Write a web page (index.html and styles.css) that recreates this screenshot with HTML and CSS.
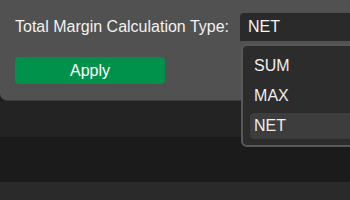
FILE: index.html
```html
<!DOCTYPE html>
<html lang="en">
<head>
  <meta charset="UTF-8" />
  <title>Margin Settings</title>
  <link rel="stylesheet" href="styles.css">
</head>
<body>

  <div class="panel">
    <div class="field">
      <label class="field-label">Total Margin Calculation Type:</label>
      <div class="select">
        <span class="select-value">NET</span>
        <ul class="menu">
          <li>SUM</li>
          <li>MAX</li>
          <li class="active">NET</li>
        </ul>
      </div>
    </div>
    <button class="apply">Apply</button>
  </div>

  <div class="row row-a"></div>
  <div class="row row-b"></div>
  <div class="row row-c"></div>

</body>
</html>
```

FILE: styles.css
```css
* {
  box-sizing: border-box;
}

body {
  margin: 0;
  background: #1a1a1a;
  font-family: "Liberation Sans", Arial, sans-serif;
  font-size: 16px;
  color: #f0f0f0;
  overflow: hidden;
}

.panel {
  height: 101px;
  padding: 13px 0 0 15px;
  background: #515151;
  border-bottom: 1px solid #3c3c3c;
  border-radius: 0 0 0 7px;
}

.field {
  display: flex;
  align-items: center;
  gap: 11px;
}

.field-label {
  color: #f2f2f2;
}

.select {
  position: relative;
  flex: 1;
  height: 28px;
  padding-left: 8px;
  display: flex;
  align-items: center;
  background: #2a2a2a;
  border-radius: 4px 0 0 0;
}

.select-value {
  color: #f5f5f5;
}

.menu {
  position: absolute;
  top: 31px;
  left: 1px;
  right: 0;
  margin: 0;
  padding: 7px 0 6px 7px;
  list-style: none;
  background: #2c2c2c;
  border: 2px solid #585858;
  border-right: none;
  border-radius: 6px 0 0 6px;
  display: flex;
  flex-direction: column;
  gap: 4px;
}

.menu li {
  height: 26px;
  line-height: 26px;
  padding-left: 4px;
  color: #eeeeee;
  border-radius: 4px 0 0 4px;
}

.menu li.active {
  background: #3d3d3d;
}

.apply {
  display: block;
  width: 150px;
  height: 27px;
  margin-top: 16px;
  background: #00924a;
  color: #ffffff;
  border: none;
  border-radius: 4px;
  font-family: inherit;
  font-size: 16px;
}

.row-a {
  height: 36px;
  background: #232323;
}

.row-b {
  height: 45px;
  background: #1b1b1b;
}

.row-c {
  height: 18px;
  background: #2a2a2a;
}
```
